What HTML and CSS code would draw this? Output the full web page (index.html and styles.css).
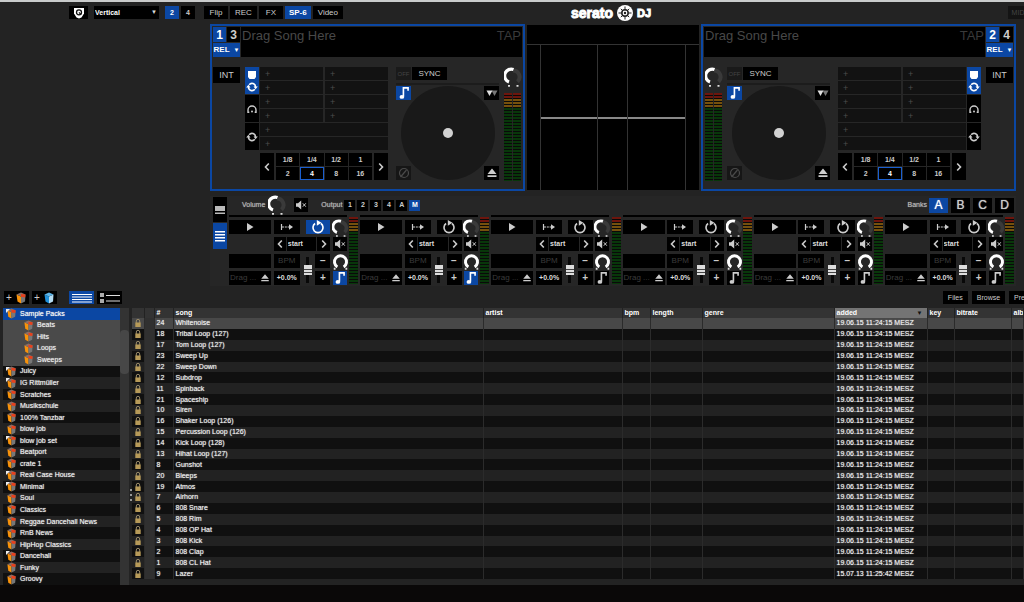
FILE: index.html
```html
<!DOCTYPE html>
<html lang="en">
<head>
<meta charset="utf-8">
<meta name="viewport" content="width=device-width, initial-scale=1">
<title>Serato DJ</title>
<link rel="stylesheet" href="styles.css">
</head>
<body>
<svg class="defs" aria-hidden="true">
  <symbol id="i-shield" viewBox="0 0 12 12"><path d="M1 1h10v5.500L8.500 10.500 6 11.500 3.500 10.500 1 6.500z" fill="#fff"/><circle cx="6" cy="5.300" r="2.500" fill="none" stroke="#111" stroke-width="1.300"/><path d="M6 5.300l2.200 2.600" stroke="#111" stroke-width="1.100"/></symbol>
  <symbol id="i-cue" viewBox="0 0 12 12"><path d="M2 2h8v6L8.500 10h-5L2 8z" fill="#fff"/></symbol>
  <symbol id="i-cycle" viewBox="0 0 12 12"><g fill="none" stroke="currentColor" stroke-width="1.600"><path d="M3.200 3.800A3.500 3.500 0 0 1 9.500 6"/><path d="M8.800 8.200A3.500 3.500 0 0 1 2.500 6"/></g><path d="M7.500 5.500h4.300L9.600 8.200zM.2 6.500h4.300L2.400 3.800z" fill="currentColor"/></symbol>
  <symbol id="i-arc" viewBox="0 0 12 12"><path d="M3.300 9.300H2V7a4 4 0 0 1 8 0v2.300H8.700" fill="none" stroke="currentColor" stroke-width="1.400"/><circle cx="6" cy="8.500" r="1" fill="currentColor"/></symbol>
  <symbol id="i-note" viewBox="0 0 12 12"><path d="M5.500 9V1.600h4V4" fill="none" stroke="currentColor" stroke-width="1.400"/><ellipse cx="4.200" cy="9.400" rx="2" ry="1.600" fill="currentColor"/></symbol>
  <symbol id="i-eject" viewBox="0 0 12 12"><path d="M6 1.500l4.500 5.500h-9zM1.500 8.300h9V10h-9z" fill="currentColor"/></symbol>
  <symbol id="i-tris" viewBox="0 0 12 12"><path d="M5.500 3.500h6L8.500 9z" fill="#777"/><path d="M.5 3.500h6L3.500 9z" fill="#ddd"/></symbol>
  <symbol id="i-slip" viewBox="0 0 12 12"><circle cx="6" cy="6" r="4.500" fill="none" stroke="#4a4a4a" stroke-width="1.200"/><path d="M2.500 10l6-7" stroke="#4a4a4a" stroke-width="1.200"/></symbol>
  <symbol id="i-left" viewBox="0 0 12 12"><path d="M7.800 2.500L4.500 6l3.300 3.500" fill="none" stroke="currentColor" stroke-width="1.600"/></symbol>
  <symbol id="i-right" viewBox="0 0 12 12"><path d="M4.200 2.500L7.500 6 4.200 9.500" fill="none" stroke="currentColor" stroke-width="1.600"/></symbol>
  <symbol id="i-play" viewBox="0 0 12 12"><path d="M3 2L9.500 6 3 10z" fill="currentColor"/></symbol>
  <symbol id="i-trigger" viewBox="0 0 14 12"><path d="M1.500 3v6" stroke="currentColor" stroke-width="1.200"/><path d="M2 6h8" stroke="currentColor" stroke-width="1.200" stroke-dasharray="2 .8"/><path d="M9 3.300L13 6 9 8.700z" fill="currentColor"/></symbol>
  <symbol id="i-loop" viewBox="0 0 12 12"><path d="M3.500 3A4.300 4.300 0 1 0 8.500 3" fill="none" stroke="currentColor" stroke-width="1.400"/><path d="M5 0v5L9 2.300z" fill="currentColor"/></symbol>
  <symbol id="i-mute" viewBox="0 0 12 12"><path d="M1 4.300h2L6.200 1.500v9L3 7.700H1z" fill="currentColor"/><path d="M7.800 4.300l3 3.400M10.800 4.300l-3 3.400" stroke="currentColor"/></symbol>
  <symbol id="i-knob" viewBox="0 0 18 20"><path d="M9 3.500a6.500 6.500 0 0 1 4.500 11.200" fill="none" stroke="#3a3a3a" stroke-width="4"/><path d="M9.500 2.500A6.500 6.500 0 0 0 5 15" fill="none" stroke="#fff" stroke-width="3.300"/><path d="M4 18h2v1.700H4zM12.500 18h2v1.700h-2z" fill="#ddd"/></symbol>
  <symbol id="i-knobfull" viewBox="0 0 18 20"><path d="M5.500 15.500a6.700 6.700 0 1 1 7 0" fill="none" stroke="#fff" stroke-width="3.300"/><path d="M1.500 16.500h2v2h-2zM14.500 16.500h2v2h-2z" fill="#ddd"/></symbol>
  <symbol id="i-single" viewBox="0 0 12 12"><path d="M1 2h10v5H1zM1 8.500h10V10H1z" fill="#bbb"/></symbol>
  <symbol id="i-rows" viewBox="0 0 12 12"><path d="M1 1h10v1.500H1zM1 4h10v1.500H1zM1 7h10v1.500H1zM1 10h10v1.500H1z" fill="#fff"/></symbol>
  <symbol id="i-crate" viewBox="0 0 12 12"><path d="M1.500 2.500L6 4.500v7L2.500 9.500z" fill="#f8920a"/><path d="M6 4.500l4.500-2-.5 7-4 2z" fill="#777"/><path d="M1.500 2.500L6 .5l4.500 2L6 4.500z" fill="#8a6f66"/><path d="M6 2l4.500.5-.3 3L6 4.800z" fill="#e8401c"/></symbol>
  <symbol id="i-smart" viewBox="0 0 12 12"><path d="M1.500 2.500L6 4.500v7L2.500 9.500z" fill="#1f8fd8"/><path d="M6 4.500l4.500-2-.5 7-4 2z" fill="#b5dcf2"/><path d="M1.500 2.500L6 .5l4.500 2L6 4.500z" fill="#5db6ea"/></symbol>
  <symbol id="i-lines" viewBox="0 0 20 10"><path d="M0 1.500h20M0 4h20M0 6.500h20M0 9h20" stroke="#fff"/></symbol>
  <symbol id="i-art" viewBox="0 0 20 10"><path d="M0 0h4v4H0zM0 6h4v4H0z" fill="#aaa"/><path d="M6 2.500h14M6 8h14" stroke="#ddd" stroke-width="1.200"/></symbol>
  <symbol id="i-lock" viewBox="0 0 8 10"><path d="M2.300 5V3a1.700 1.700 0 0 1 3.400 0v2" fill="none" stroke="#998a68"/><path d="M1.300 4.500h5.400V9H1.300z" fill="#b79a58"/></symbol>
  <symbol id="i-logo" viewBox="0 0 16 16"><circle cx="8" cy="8" r="8" fill="#fff"/><circle cx="8" cy="8" r="3.200" fill="none" stroke="#222" stroke-width="1.500"/><path d="M8 1.500v4M8 10.500v4M1.500 8h4M10.500 8h4M3.800 3.800l2 2M10.200 10.200l2 2M12.200 3.800l-2 2M3.800 12.200l2-2" stroke="#222" stroke-width="1"/><circle cx="8" cy="8" r="1.200" fill="#222"/></symbol>
</svg>

<div class="app">
  <header class="topbar">
    <div class="setup">
      <button class="btn shield" aria-label="Account"><svg class="icon"><use href="#i-shield"/></svg></button>
      <div class="picker">
        <select class="view-select" aria-label="Display mode"><option>Vertical</option></select>
        <span class="picker-arrow">▼</span>
      </div>
      <div class="pair">
        <button class="btn deckcount on">2</button>
        <button class="btn deckcount">4</button>
      </div>
    </div>
    <div class="main-menu">
      <nav class="panels">
        <button class="btn">Flip</button>
        <button class="btn">REC</button>
        <button class="btn">FX</button>
        <button class="btn on">SP-6</button>
        <button class="btn">Video</button>
      </nav>
      <div class="logo"><span class="logo-name">serato</span><svg class="logo-mark"><use href="#i-logo"/></svg><span class="logo-dj">DJ</span></div>
      <button class="btn midi">MIDI</button>
    </div>
  </header>

  <main class="stage">
    <section class="deck" data-on="1" data-off="3" aria-label="Deck 1"></section>
    <section class="waves" aria-label="Waveforms">
      <div class="wave-head"></div>
      <div class="wave-body"><div class="lane"></div><div class="lane"></div><div class="lane"></div></div>
    </section>
    <section class="deck mirrored" data-on="2" data-off="4" aria-label="Deck 2"></section>
  </main>

  <section class="sampler" aria-label="Sampler">
    <div class="sampler-modes">
      <button class="btn" aria-label="Simple view"><svg class="icon"><use href="#i-single"/></svg></button>
      <button class="btn on" aria-label="Advanced view"><svg class="icon"><use href="#i-rows"/></svg></button>
    </div>
    <div class="sampler-main">
      <div class="sampler-bar">
        <span class="caption">Volume</span>
        <svg class="knob"><use href="#i-knob"/></svg>
        <button class="btn mute" aria-label="Mute"><svg class="icon"><use href="#i-mute"/></svg></button>
        <span class="caption output-caption">Output</span>
        <div class="outputs">
          <button class="btn">1</button><button class="btn">2</button><button class="btn">3</button><button class="btn">4</button><button class="btn">A</button><button class="btn on">M</button>
        </div>
        <span class="caption banks-caption">Banks</span>
        <div class="banks">
          <button class="btn on">A</button><button class="btn">B</button><button class="btn">C</button><button class="btn">D</button>
        </div>
      </div>
      <div class="slots"></div>
    </div>
  </section>

  <div class="library-bar">
    <button class="btn add" aria-label="Add crate">+<svg class="icon"><use href="#i-crate"/></svg></button>
    <button class="btn add" aria-label="Add smart crate">+<svg class="icon"><use href="#i-smart"/></svg></button>
    <div class="list-modes">
      <button class="btn on" aria-label="List"><svg class="lines"><use href="#i-lines"/></svg></button>
      <button class="btn" aria-label="Album art"><svg class="lines"><use href="#i-art"/></svg></button>
    </div>
    <div class="tabs">
      <button class="btn">Files</button>
      <button class="btn">Browse</button>
      <button class="btn">Prepare</button>
    </div>
  </div>

  <div class="library">
    <ul class="crates"></ul>
    <div class="scroll"><div class="thumb"></div></div>
    <div class="divider"><i></i><i></i><i></i></div>
    <div class="tracks">
      <table>
        <colgroup><col class="c-lock"><col class="c-status"><col class="c-num"><col class="c-song"><col class="c-artist"><col class="c-bpm"><col class="c-length"><col class="c-genre"><col class="c-added"><col class="c-key"><col class="c-bitrate"><col></colgroup>
        <thead><tr><th></th><th></th><th>#</th><th>song</th><th>artist</th><th>bpm</th><th>length</th><th>genre</th><th class="sorted"><span class="sort-row">added<span class="sort-mark">▼</span></span></th><th>key</th><th>bitrate</th><th>album</th></tr></thead>
        <tbody></tbody>
      </table>
    </div>
  </div>
  <footer class="footer"></footer>
</div>
<script src="app.js"></script>
</body>
</html>
```
FILE: app.js
```js
const icon = (name, cls = 'icon') => `<svg class="${cls}"><use href="#i-${name}"/></svg>`;

document.querySelectorAll('.deck').forEach(deck => {
  const pads = n => `<button class="pad">+</button>`.repeat(n);
  const beats = ['1/8', '1/4', '1/2', '1', '2', '4', '8', '16']
    .map(b => `<button class="btn beat${b === '4' ? ' picked' : ''}">${b}</button>`).join('');
  deck.innerHTML = `
    <div class="deck-head">
      <div class="deck-id">
        <button class="btn num on">${deck.dataset.on}</button>
        <button class="btn num">${deck.dataset.off}</button>
        <button class="btn rel on">REL <span class="tiny">▼</span></button>
      </div>
      <div class="song"><span>Drag Song Here</span><button class="tap">TAP</button></div>
    </div>
    <div class="deck-body">
      <button class="btn int">INT</button>
      <div class="pad-area">
        <div class="pad-modes">
          <button class="btn on" aria-label="Cues and loops">${icon('cue')}${icon('cycle')}</button>
          <button class="btn" aria-label="Rolls">${icon('arc')}</button>
          <button class="btn" aria-label="Loops">${icon('cycle')}</button>
        </div>
        <div class="pad-col">
          <div class="pads">${pads(10)}</div>
          <div class="autoloop">
            <button class="btn" aria-label="Shorter">${icon('left')}</button>
            <div class="beats">${beats}</div>
            <button class="btn" aria-label="Longer">${icon('right')}</button>
          </div>
        </div>
      </div>
      <div class="platter-col">
        <div class="sync"><button class="btn off">OFF</button><button class="btn">SYNC</button></div>
        <div class="platter-box">
          <div class="platter"><div class="spindle"></div></div>
          <button class="btn corner tl on" aria-label="Keylock">${icon('note', 'big')}</button>
          <button class="btn corner tr" aria-label="Pitch range">${icon('tris')}</button>
          <button class="btn corner bl" aria-label="Slip">${icon('slip')}</button>
          <button class="btn corner br" aria-label="Eject">${icon('eject')}</button>
        </div>
      </div>
      <div class="level">
        ${icon('knob', 'knob')}
        <div class="meters"><div class="meter"></div><div class="meter"></div></div>
      </div>
    </div>`;
});

const slots = document.querySelector('.slots');
for (let i = 0; i < 6; i++) {
  slots.insertAdjacentHTML('beforeend', `
    <div class="slot">
      <div class="slot-grid">
        <div class="progress"></div>
        <button class="btn" aria-label="Play">${icon('play')}</button>
        <button class="btn" aria-label="Trigger mode">${icon('trigger', 'wide')}</button>
        <button class="btn loop${i === 0 ? ' on' : ''}" aria-label="Loop">${icon('loop', 'big')}</button>
        ${icon('knob', 'knob')}
        <div class="start">
          <button class="btn" aria-label="Previous">${icon('left')}</button>
          <select aria-label="Start point"><option>start</option></select>
          <button class="btn" aria-label="Next">${icon('right')}</button>
        </div>
        <button class="btn" aria-label="Mute">${icon('mute')}</button>
        <div class="box name"></div>
        <div class="box bpm">BPM</div>
        <input class="fader" type="range" aria-label="Pitch">
        <button class="btn sign">−</button>
        ${icon('knobfull', 'knob')}
        <div class="box drag"><span>Drag ...</span>${icon('eject')}</div>
        <div class="box pitch">+0.0%</div>
        <button class="btn sign plus">+</button>
        <button class="btn${i < 2 ? ' on' : ''}" aria-label="Keylock">${icon('note', 'big')}</button>
      </div>
      <div class="meter"></div>
    </div>`);
}

const crates = ['Sample Packs', '-Beats', '-Hits', '-Loops', '-Sweeps', '>Juicy', '>IG Rittmüller',
  'Scratches', 'Musikschule', '100% Tanzbar', 'blow job', '>blow job set', 'Beatport', 'crate 1',
  '>Real Case House', '>Minimal', 'Soul', 'Classics', 'Reggae Dancehall News', 'RnB News',
  'HipHop Classics', '>Dancehall', 'Funky', 'Groovy'];
document.querySelector('.crates').innerHTML = crates.map((c, i) => {
  const cls = (i === 0 ? 'selected parent' : '') + (c[0] === '-' ? 'child' : '') + (c[0] === '>' ? 'parent' : '');
  return `<li class="${cls}">${icon('crate')}<span>${c.replace(/^[->]/, '')}</span></li>`;
}).join('');

const tracks = [[24, 'Whitenoise'], [18, 'Tribal Loop (127)'], [17, 'Tom Loop (127)'], [23, 'Sweep Up'],
  [22, 'Sweep Down'], [12, 'Subdrop'], [11, 'Spinback'], [21, 'Spaceship'], [10, 'Siren'],
  [16, 'Shaker Loop (126)'], [15, 'Percussion Loop (126)'], [14, 'Kick Loop (128)'],
  [13, 'Hihat Loop (127)'], [8, 'Gunshot'], [20, 'Bleeps'], [19, 'Atmos'], [7, 'Airhorn'],
  [6, '808 Snare'], [5, '808 Rim'], [4, '808 OP Hat'], [3, '808 Kick'], [2, '808 Clap'],
  [1, '808 CL Hat'], [9, 'Lazer', '15.07.13 11:25:42 MESZ']];
document.querySelector('tbody').innerHTML = tracks.map(([n, song, added]) =>
  `<tr><td>${icon('lock', 'lock')}</td><td></td><td>${n}</td><td>${song}</td><td></td><td></td><td></td><td></td><td>${added || '19.06.15 11:24:15 MESZ'}</td><td></td><td></td><td></td></tr>`).join('');
```
FILE: styles.css
```css
* { box-sizing: border-box; }
body {
  margin: 0;
  background: #232323;
  color: #ddd;
  font: 7px/10px "Liberation Sans", Arial, sans-serif;
  overflow-x: hidden;
}
.defs { position: absolute; width: 0; height: 0; }
button, select, input { font: inherit; color: inherit; margin: 0; padding: 0; border: 0; border-radius: 0; }
svg { display: block; }
.icon { width: 12px; height: 12px; flex: none; }
.big { width: 14px; height: 14px; flex: none; }
.wide { width: 14px; height: 12px; flex: none; }
.knob { width: 18px; height: 20px; flex: none; }

.btn {
  display: flex;
  align-items: center;
  justify-content: center;
  background: #000;
  color: #ccc;
  white-space: nowrap;
}
.btn.on { background: #0b47a3; color: #fff; }

.app { display: flex; flex-direction: column; min-height: 100vh; border-top: 2px solid #c9cbcb; overflow: hidden; }

/* Top bar */
.topbar { display: flex; padding: 4px 6px 5px 69px; }
.topbar .btn { height: 13px; }
.setup { display: flex; gap: 6px; width: 135px; flex: none; }
.shield { width: 19px; }
.picker { position: relative; width: 65px; }
.view-select { appearance: none; width: 65px; height: 13px; padding-left: 1px; background: #000; color: #fff; font-size: 7px; line-height: 13px; font-weight: bold; }
.picker-arrow { position: absolute; right: 2px; top: 1px; font-size: 6px; pointer-events: none; }
.pair { display: flex; gap: 2px; }
.deckcount { width: 14px; font-weight: bold; }
.main-menu { flex: 1; display: grid; grid-template-columns: 1fr auto 1fr; }
.panels { display: flex; gap: 2px; font-size: 8px; }
.panels .btn { padding: 0 5px; min-width: 24px; }
.panels .on { font-weight: bold; padding: 0 4px; }
.logo { display: flex; align-items: center; height: 13px; gap: 4px; color: #fff; font-weight: bold; }
.logo-name { font-size: 14px; line-height: 14px; -webkit-text-stroke: 1px #fff; }
.logo-dj { font-size: 11px; -webkit-text-stroke: 1px #fff; }
.logo-mark { width: 16px; height: 16px; }
.midi { justify-self: end; width: 22px; margin-right: -12px; }
.midi.btn { color: #444; background: #141414; }

/* Decks */
.stage { display: grid; grid-template-columns: 315px 1fr 315px; gap: 2px; padding: 0 8px 0 210px; }
.deck { background: #262626; border: 2px solid #0b47a3; padding: 1px 1px 8px; display: flex; flex-direction: column; gap: 10px; }
.deck-head { display: flex; gap: 1px; }
.deck-id { display: grid; grid-template-columns: 13px 13px; gap: 1px; width: 27px; flex: none; }
.num { height: 15px; font-size: 12px; font-weight: bold; }
.rel { grid-column: span 2; height: 14px; font-size: 8px; font-weight: bold; gap: 4px; }
.tiny { font-size: 6px; }
.song { flex: 1; display: flex; justify-content: space-between; align-items: flex-start; background: #000; padding: 0 1px; font-size: 13px; line-height: 18px; color: #484848; }
.tap { background: none; color: #3a3a3a; line-height: 18px; }
.deck-body { display: flex; height: 114px; align-items: flex-start; padding-right: 1px; }
.mirrored .deck-body { padding: 0 0 0 1px; }
.mirrored .deck-head, .mirrored .deck-body, .mirrored .pad-area { flex-direction: row-reverse; }
.int { width: 27px; height: 16px; font-size: 9px; }
.pad-area { display: flex; gap: 1px; margin: 0 8px 0 5px; flex: 1; }
.mirrored .pad-area { margin: 0 5px 0 8px; }
.pad-modes { display: grid; grid-template-rows: repeat(3, 27px); gap: 1px; width: 14px; flex: none; }
.pad-modes .btn { flex-direction: column; }
.pad-col { flex: 1; display: flex; flex-direction: column; gap: 3px; }
.pads { display: grid; grid-template-columns: 1fr 1fr; grid-auto-rows: 13px; gap: 1px 2px; }
.pad { background: #121212; color: #4c4c4c; text-align: left; padding-left: 5px; font-size: 9px; }
.pad:nth-child(n+9) { grid-column: span 2; }
.autoloop { display: grid; grid-template-columns: 14px 1fr 14px; gap: 2px; }
.beats { display: grid; grid-template-columns: repeat(4, 1fr); grid-auto-rows: 13px; gap: 1px; font-weight: bold; }
.beat.picked { border: 1px solid #1a5fd0; color: #fff; }
.platter-col { width: 103px; flex: none; }
.sync { display: flex; gap: 1px; padding-bottom: 3px; border-bottom: 2px solid #1c1c1c; margin-bottom: 1px; }
.sync .btn { width: 35px; height: 13px; font-size: 8px; }
.sync .off { width: 15px; font-size: 6px; background: #1a1a1a; color: #444; }
.platter-box { position: relative; display: flex; justify-content: center; }
.platter { width: 94px; height: 94px; border-radius: 50%; background: #191919; display: flex; align-items: center; justify-content: center; }
.spindle { width: 10px; height: 10px; border-radius: 50%; background: #d2d2d2; }
.corner { position: absolute; width: 15px; height: 14px; }
.tl { top: 0; left: 0; }
.tr { top: 0; right: 0; }
.bl { bottom: 0; left: 0; }
.bl.btn { background: #161616; }
.br { bottom: 0; right: 0; }
.level { width: 17px; margin-left: 5px; height: 114px; display: flex; flex-direction: column; align-items: center; gap: 6px; flex: none; }
.mirrored .level { margin: 0 5px 0 0; }
.meters { display: flex; gap: 1px; flex: 1; width: 100%; }
.meter {
  flex: 1;
  background:
    repeating-linear-gradient(#0000 0 2px, #0a0a0a 2px 3px),
    linear-gradient(#6d150d 0 6px, #75500d 6px 15px, #08370a 15px);
}

.waves { background: #000; margin: 1px 0; display: flex; flex-direction: column; }
.wave-head { height: 20px; border-bottom: 1px solid #333; }
.wave-body { flex: 1; display: grid; grid-template-columns: 57fr 31fr 58fr; margin: 0 13px; border-left: 1px solid #333; }
.lane { border-right: 1px solid #333; background: linear-gradient(#888, #888) 0 50% / 100% 2px no-repeat; }

/* Sampler */
.sampler { display: flex; gap: 2px; margin: 5px 8px 0 210px; padding: 1px 2px 2px 3px; background: #262626; }
.sampler-modes { display: grid; grid-template-rows: 25px 26px; gap: 1px; width: 14px; }
.sampler-main { flex: 1; }
.sampler-bar { display: flex; align-items: center; height: 16px; padding-left: 13px; }
.caption { font-size: 7px; color: #bbb; text-shadow: 0 0 1px #999; }
.sampler-bar .knob { margin: 0 8px 0 3px; }
.mute { width: 14px; height: 14px; }
.output-caption { margin-left: 13px; }
.outputs { display: flex; gap: 2px; margin-left: 2px; font-weight: bold; }
.outputs .btn { width: 11px; height: 11px; }
.banks-caption { margin-left: auto; }
.banks { display: flex; gap: 3px; margin-left: 2px; }
.banks .btn { width: 19px; height: 15px; font-size: 12px; text-shadow: 0 0 1px currentColor; }
.slots { display: grid; grid-template-columns: repeat(6, 1fr); gap: 2px; margin-top: 2px; }
.slot { display: flex; gap: 2px; height: 69px; }
.slot > .meter { flex: none; width: 9px; margin-top: 2px; }
.slot-grid { flex: 1; display: grid; grid-template-columns: 42px 26px 10px 15px 14px; grid-template-rows: 2px 14px 14px 14px 14px; gap: 3px 2px; justify-content: space-between; }
.slot-grid > * { min-width: 0; }
.progress { grid-column: 1 / -1; background: #000; }
.loop { grid-column: 3 / 5; margin-left: 3px; }
.slot .knob { width: 17px; height: 18px; margin: -1px 0 0 -1px; }
.start { grid-column: 2 / 5; display: grid; grid-template-columns: 12px 1fr 13px; gap: 1px; }
.start select { appearance: none; background: #000; color: #ddd; padding-left: 1px; font-size: 7px; font-weight: bold; }
.box { background: #000; display: flex; align-items: center; justify-content: center; white-space: nowrap; overflow: hidden; }
.name { grid-column: 1; grid-row: 4; }
.bpm { font-size: 8px; color: #3c3c3c; grid-row: 4; }
.fader { grid-column: 3; grid-row: 4 / 6; appearance: none; background: linear-gradient(#080808, #080808) 50% 50% / 3px 26px no-repeat; writing-mode: vertical-lr; width: 10px; height: 31px; }
.fader::-webkit-slider-thumb { appearance: none; width: 8px; height: 10px; background: linear-gradient(#ddd 0 4px, #444 4px 5px, #ddd 5px 7px, #444 7px 8px, #ddd 8px); }
.sign { font-size: 10px; font-weight: bold; }
.drag { grid-column: 1; grid-row: 5; font-size: 8px; color: #3c3c3c; justify-content: space-between; padding: 0 1px; }
.drag svg { color: #ccc; width: 10px; height: 10px; }
.pitch { grid-row: 5; color: #ddd; font-size: 7px; font-weight: bold; }
.plus { grid-column: 4; grid-row: 5; }

/* Library */
.library-bar { display: flex; gap: 3px; padding: 5px 0 4px 4px; }
.library-bar .btn { height: 13px; }
.add { width: 25px; gap: 3px; font-size: 10px; }
.list-modes { display: flex; gap: 3px; margin-left: 9px; }
.list-modes .btn { width: 25px; }
.lines { width: 20px; height: 10px; }
.tabs { display: flex; gap: 4px; margin: 0 -20px 0 auto; text-shadow: 0 0 1px #999; }
.tabs .btn { min-width: 25px; padding: 0 5px; }
.library { flex: 1; display: flex; }
.crates { list-style: none; margin: 0 0 0 3px; padding: 0; width: 117px; display: grid; grid-auto-rows: 1fr; color: #f0f0f0; text-shadow: 0 0 1px #ccc; }
.crates li { display: flex; align-items: center; gap: 3px; padding-left: 3px; min-height: 11px; background: #101010; position: relative; white-space: nowrap; }
.crates li:nth-child(odd) { background: #222; }
.crates li.child { background: #4a4a4a; padding-left: 20px; }
.crates li.selected { background: #0b47a3; color: #fff; }
.crates .icon { width: 11px; height: 11px; }
.parent::before { content: ""; position: absolute; left: 3px; top: 1px; border: 2px solid #eee; border-right-color: transparent; border-bottom-color: transparent; }
.scroll { width: 9px; background: #333; }
.thumb { height: 44px; margin-top: 22px; background: #474747; border-radius: 4px; }
.divider { width: 3px; display: flex; flex-direction: column; align-items: center; justify-content: flex-end; gap: 3px; padding-bottom: 84px; }
.divider i { width: 2px; height: 2px; background: #999; }
.tracks { flex: 1; min-width: 0; padding-bottom: 6px; }
table { width: 100%; height: 100%; table-layout: fixed; border-collapse: collapse; color: #f0f0f0; text-shadow: 0 0 1px #ccc; }
th, td { padding: 0 0 0 2px; text-align: left; white-space: nowrap; overflow: hidden; line-height: 10px; border-right: 1px solid #2b2b2b; }
th { background: #333; color: #fff; border-right-color: #222; text-shadow: none; }
th.sorted { background: #747474; }
.sort-row { display: flex; justify-content: space-between; padding-right: 4px; }
.sort-mark { color: #111; font-size: 6px; }
tbody tr { background: #222; }
tbody tr:nth-child(even) { background: #101010; }
tbody tr:first-child { background: #484848; }
td:nth-child(2) { background: #303030; }
.lock { width: 8px; height: 10px; }
.c-lock { width: 12px; }
.c-status { width: 10px; }
.c-num { width: 19px; }
.c-song { width: 310px; }
.c-artist { width: 139px; }
.c-bpm { width: 28px; }
.c-length { width: 52px; }
.c-genre { width: 132px; }
.c-added { width: 93px; }
.c-key { width: 27px; }
.c-bitrate { width: 57px; }
.footer { height: 17px; background: #0a0808; }
```
